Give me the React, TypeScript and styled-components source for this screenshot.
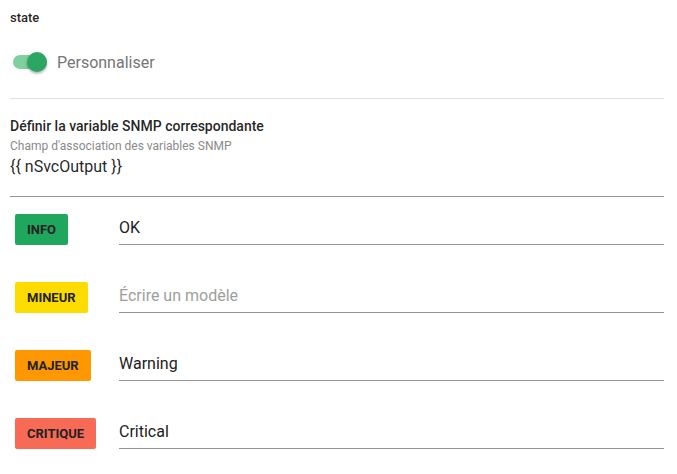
import React from "react";
import styled, { createGlobalStyle } from "styled-components";

const GlobalStyle = createGlobalStyle`
	body {
		margin: 0;
		background: #fff;
		font-family: Roboto, "Noto Sans", sans-serif;
		color: rgba(0, 0, 0, 0.87);
	}
`;

const Panel = styled.div`
	display: flex;
	flex-direction: column;
	padding: 10px 13px 0 10px;
`;

const FieldLabel = styled.div`
	font-size: 13px;
	line-height: 16px;
	font-weight: 500;
`;

const ToggleRow = styled.label`
	display: flex;
	align-items: center;
	gap: 10px;
	height: 40px;
	margin-top: 16px;
	padding-left: 3px;
`;

const Track = styled.span`
	position: relative;
	width: 34px;
	height: 14px;
	border-radius: 7px;
	background: #80cfa1;
`;

const Thumb = styled.span`
	position: absolute;
	right: 0;
	top: -3px;
	width: 20px;
	height: 20px;
	border-radius: 50%;
	background: #2ba763;
	box-shadow: 0 2px 2px rgba(0, 0, 0, 0.2), 0 1px 4px rgba(0, 0, 0, 0.12);
`;

const ToggleText = styled.span`
	font-size: 16px;
	color: #757575;
`;

const Divider = styled.hr`
	margin: 16px 0 0;
	border: none;
	border-top: 1px solid #e0e0e0;
`;

const SectionTitle = styled.div`
	margin-top: 18px;
	font-size: 14px;
	line-height: 18px;
	font-weight: 500;
`;

const Helper = styled.div`
	margin-top: 3px;
	font-size: 12px;
	line-height: 16px;
	color: #8a8a8a;
`;

const Value = styled.div`
	margin-top: 3px;
	padding-bottom: 19px;
	font-size: 16px;
	line-height: 20px;
	border-bottom: 1px solid #949494;
`;

const Rows = styled.div`
	display: flex;
	flex-direction: column;
	gap: 37px;
	margin-top: 17px;
`;

const Row = styled.div`
	display: flex;
	align-items: flex-start;
`;

const ChipCell = styled.div`
	width: 109px;
	padding-left: 5px;
	box-sizing: border-box;
	flex-shrink: 0;
`;

const Chip = styled.span<{ $bg: string }>`
	display: inline-flex;
	align-items: center;
	height: 31px;
	padding: 0 12px;
	border-radius: 2px;
	background: ${({ $bg }) => $bg};
	color: #222;
	font-size: 13px;
	font-weight: 700;
	text-transform: uppercase;
`;

const Input = styled.input`
	flex: 1;
	min-width: 0;
	margin: 0;
	padding: 4px 0 6px;
	border: none;
	border-bottom: 1px solid #949494;
	outline: none;
	background: transparent;
	font-family: inherit;
	font-size: 16px;
	line-height: 20px;
	color: #212121;

	&::placeholder {
		color: #9e9e9e;
	}
`;

const levels = [
	{ label: "Info", color: "#1ea75d", value: "OK" },
	{ label: "Mineur", color: "#ffdc00", value: "" },
	{ label: "Majeur", color: "#ff9800", value: "Warning" },
	{ label: "Critique", color: "#f76a56", value: "Critical" },
];

const App: React.FC = () => {
	return (
		<>
			<GlobalStyle />
			<Panel>
				<FieldLabel>state</FieldLabel>
				<ToggleRow>
					<Track>
						<Thumb />
					</Track>
					<ToggleText>Personnaliser</ToggleText>
				</ToggleRow>
				<Divider />
				<SectionTitle>Définir la variable SNMP correspondante</SectionTitle>
				<Helper>Champ d'association des variables SNMP</Helper>
				<Value>{"{{ nSvcOutput }}"}</Value>
				<Rows>
					{levels.map((level) => (
						<Row key={level.label}>
							<ChipCell>
								<Chip $bg={level.color}>{level.label}</Chip>
							</ChipCell>
							<Input
								defaultValue={level.value}
								placeholder="Écrire un modèle"
							/>
						</Row>
					))}
				</Rows>
			</Panel>
		</>
	);
};

export default App;
